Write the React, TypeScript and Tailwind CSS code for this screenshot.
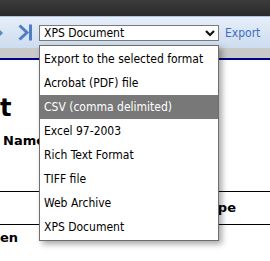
import React from 'react';

const formats = [
  'Export to the selected format',
  'Acrobat (PDF) file',
  'CSV (comma delimited)',
  'Excel 97-2003',
  'Rich Text Format',
  'TIFF file',
  'Web Archive',
  'XPS Document',
];

const ExportMenu: React.FC<{ active: number }> = ({ active }) => (
  <ul className="absolute left-[39px] top-[45px] w-[180px] bg-white border border-[#6e6e6e] py-[1px] shadow-[3px_3px_6px_rgba(0,0,0,0.35)]">
    {formats.map((f, i) => (
      <li
        key={f}
        className={
          'h-[24px] flex items-center px-[4px] text-[12px] whitespace-nowrap ' +
          (i === active ? 'bg-[#787878] text-white' : 'text-black')
        }
      >
        {f}
      </li>
    ))}
  </ul>
);

export default function App() {
  return (
    <div
      className="relative w-[270px] h-[261px] overflow-hidden bg-white"
      style={{ fontFamily: '"DejaVu Sans Condensed", "DejaVu Sans", sans-serif' }}
    >
      <div className="h-[16px] bg-gradient-to-b from-[#3c3c3c] to-[#2a2a2a]" />
      <div className="h-[32px] border-t border-[#aac2e2] bg-gradient-to-b from-[#e6eef9] to-[#cddcef] flex items-center">
        <svg width="5" height="10" viewBox="0 0 5 10" className="-ml-[1px] mr-[14px]">
          <path d="M0 1 L4 5 L0 9 Z" fill="#5a88c8" />
        </svg>
        <svg width="16" height="17" viewBox="0 0 16 17" className="mr-[5px]">
          <path d="M1.5 1.5 L9 8.5 L1.5 15.5" fill="none" stroke="#4f7fc2" strokeWidth="3" strokeLinejoin="miter" />
          <rect x="11" y="0.5" width="3" height="16" fill="#4f7fc2" />
        </svg>
        <div className="relative w-[180px] h-[16px] bg-white border border-[#7a7a7a] flex items-center pl-[4px] text-[12px] text-black">
          XPS Document
          <svg width="10" height="7" viewBox="0 0 10 7" className="absolute right-[3px] top-[4px]">
            <path d="M1 1 L5 5 L9 1" fill="none" stroke="#111" strokeWidth="2.2" />
          </svg>
        </div>
        <span className="ml-[6px] text-[12px] text-[#3b6fc2]">Export</span>
      </div>
      <div className="h-[10px] bg-[#c9c9c9]" />
      <div className="h-[2px] bg-[#00008b]" />

      <div className="text-black" style={{ fontFamily: '"DejaVu Sans", Verdana, sans-serif' }}>
        <div className="h-[36px]" />
        <div className="h-[24px] text-[24px] font-bold leading-[24px]">t</div>
        <div className="h-[13px]" />
        <div className="h-[16px] text-[13px] font-bold leading-[16px] pl-[3px]">Name</div>
        <div className="h-[42px]" />
        <div className="border-t border-black h-[33px] flex items-center justify-end pr-[34px] text-[13px] font-bold">
          ype
        </div>
        <div className="border-t border-black pt-[5px] text-[13px] font-bold leading-[16px]">
          en
        </div>
      </div>

      <ExportMenu active={2} />
    </div>
  );
}
